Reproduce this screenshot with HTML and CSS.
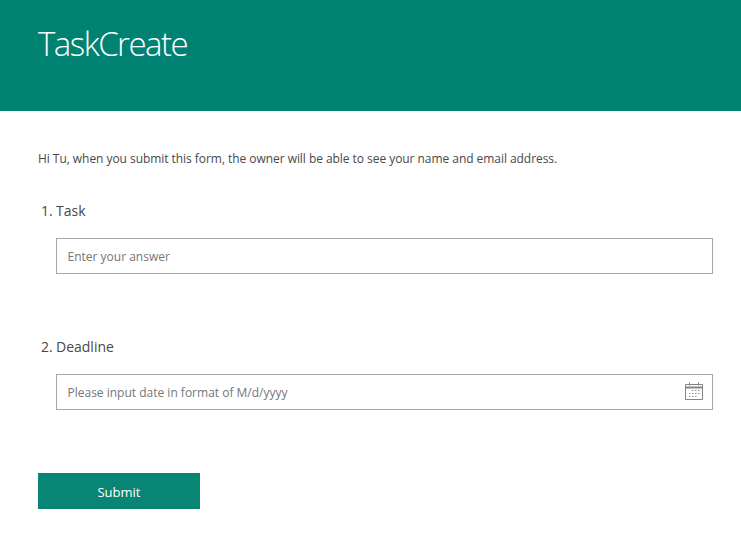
FILE: index.html
```html
<!DOCTYPE html>
<html lang="en">
<head>
    <meta charset="UTF-8">
    <meta name="viewport" content="width=device-width, initial-scale=1.0">
    <title>TaskCreate</title>
    <link rel="stylesheet" href="styles.css">
</head>
<body>
    <header class="banner">
        <h1>TaskCreate</h1>
    </header>
    <form class="form-body">
        <p class="notice">Hi Tu, when you submit this form, the owner will be able to see your name and email address.</p>

        <div class="question question-task">
            <label class="question-title" for="task"><span class="question-num">1.</span>Task</label>
            <div class="field">
                <input type="text" id="task" placeholder="Enter your answer">
            </div>
        </div>

        <div class="question question-date">
            <label class="question-title" for="deadline"><span class="question-num">2.</span>Deadline</label>
            <div class="field">
                <input type="text" id="deadline" placeholder="Please input date in format of M/d/yyyy">
                <svg class="calendar" width="20" height="18" viewBox="0 0 20 18" fill="none" stroke="#858585" stroke-width="1">
                    <path d="M1.5 2.5h17v15h-17z"/>
                    <path d="M1.5 5.5h17" stroke-width="2"/>
                    <path d="M5.5 0.5v3M14.5 0.5v3"/>
                    <path d="M8 8.5h1.5M11 8.5h1.5M14 8.5h1.5M5 11.5h1.5M8 11.5h1.5M11 11.5h1.5M14 11.5h1.5M5 14.5h1.5M8 14.5h1.5M11 14.5h1.5" stroke="#909090"/>
                </svg>
            </div>
        </div>

        <button type="button" class="submit">Submit</button>
    </form>
</body>
</html>
```

FILE: styles.css
```css
body {
    font-family: "Open Sans", "Noto Sans", sans-serif;
    margin: 0;
    background-color: #fff;
    color: #484848;
}
.banner {
    height: 111px;
    background-color: #008272;
    box-sizing: border-box;
    padding: 22px 38px 0;
}
h1 {
    margin: 0;
    font-size: 33px;
    font-weight: 300;
    letter-spacing: -1.5px;
    line-height: 44px;
    color: #fff;
}
.form-body {
    padding: 39px 28px 0 38px;
}
.notice {
    margin: 0;
    font-size: 12px;
    letter-spacing: -0.05px;
    line-height: 18px;
}
.question-task {
    margin-top: 33px;
}
.question-date {
    margin-top: 63px;
}
.question-title {
    display: flex;
    font-size: 14px;
    line-height: 20px;
    margin-left: 3px;
}
.question-num {
    width: 15px;
}
.field {
    position: relative;
    margin: 17px 0 0 18px;
}
input {
    display: block;
    width: 100%;
    height: 36px;
    box-sizing: border-box;
    border: 1px solid #a6a6a6;
    padding: 0 10.5px;
    font-family: inherit;
    font-size: 12px;
    color: #484848;
    outline: none;
}
input::placeholder {
    color: #767676;
    opacity: 1;
}
.calendar {
    position: absolute;
    top: 8px;
    right: 9px;
}
.submit {
    display: block;
    margin-top: 63px;
    width: 162px;
    height: 36px;
    padding: 2px 0 0;
    background-color: #088575;
    border: none;
    color: white;
    font-family: inherit;
    font-size: 13px;
    cursor: pointer;
}
```
